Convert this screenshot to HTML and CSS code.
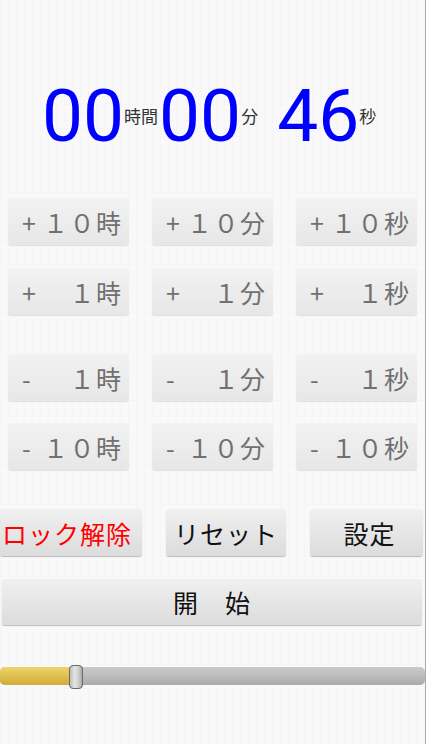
FILE: index.html
```html
<!DOCTYPE html>
<html lang="ja">
<head>
<meta charset="utf-8">
<title>Timer</title>
<link rel="stylesheet" href="styles.css">
</head>
<body>
<div class="screen">
  <div class="timer">
    <span class="big">00</span><span class="unit">時間</span>
    <span class="big mid">00</span><span class="unit">分</span>
    <span class="big sec">46</span><span class="unit">秒</span>
  </div>

  <div class="adjust plus">
    <button class="adj"><span>+</span><span class="num">１０時</span></button>
    <button class="adj"><span>+</span><span class="num">１０分</span></button>
    <button class="adj"><span>+</span><span class="num">１０秒</span></button>
    <button class="adj"><span>+</span><span class="num">１時</span></button>
    <button class="adj"><span>+</span><span class="num">１分</span></button>
    <button class="adj"><span>+</span><span class="num">１秒</span></button>
  </div>

  <div class="adjust minus">
    <button class="adj"><span>-</span><span class="num">１時</span></button>
    <button class="adj"><span>-</span><span class="num">１分</span></button>
    <button class="adj"><span>-</span><span class="num">１秒</span></button>
    <button class="adj"><span>-</span><span class="num">１０時</span></button>
    <button class="adj"><span>-</span><span class="num">１０分</span></button>
    <button class="adj"><span>-</span><span class="num">１０秒</span></button>
  </div>

  <div class="controls">
    <button class="ctl unlock">ロック解除</button>
    <button class="ctl">リセット</button>
    <button class="ctl setting">設定</button>
  </div>

  <button class="ctl start">開　始</button>

  <div class="slider">
    <div class="track">
      <div class="fill" style="width: 76px"></div>
    </div>
    <div class="thumb" style="left: 69px"></div>
  </div>
</div>
</body>
</html>
```

FILE: styles.css
```css
html, body {
  margin: 0;
  padding: 0;
}

body {
  background: #f8f8f8;
  width: 426px;
  height: 744px;
  overflow: hidden;
}

.screen {
  position: relative;
  width: 425px;
  height: 744px;
  border-right: 1px solid #a8a8a8;
  background-color: #f9f9f9;
  background-image:
    linear-gradient(rgba(0,0,0,0.012) 1px, transparent 1px),
    linear-gradient(90deg, rgba(0,0,0,0.012) 1px, transparent 1px);
  background-size: 8px 8px;
  font-family: "Noto Sans CJK JP", "Noto Sans", sans-serif;
}

.timer {
  display: flex;
  align-items: center;
  justify-content: flex-start;
  height: 74px;
  padding-top: 79px;
  padding-left: 42px;
}

.big {
  font-family: Roboto, "Open Sans", sans-serif;
  font-size: 73px;
  line-height: 74px;
  color: #0000ff;
}

.big.mid {
  margin-left: 1px;
}

.big.sec {
  margin-left: 19px;
}

.unit {
  font-family: "Noto Sans CJK JP", sans-serif;
  font-size: 17px;
  line-height: 20px;
  color: #333333;
}

button {
  font-family: "Noto Sans CJK JP", "Noto Sans", sans-serif;
  border: none;
  margin: 0;
  padding: 0;
  cursor: pointer;
}

.adjust {
  display: grid;
  grid-template-columns: 121px 121px 121px;
  grid-auto-rows: 47px;
  column-gap: 23px;
  row-gap: 23px;
  padding-left: 8px;
}

.adjust.plus {
  margin-top: 45px;
}

.adjust.minus {
  margin-top: 39px;
  row-gap: 22px;
}

.adj {
  display: flex;
  align-items: center;
  justify-content: space-between;
  padding: 0 8px 0 14px;
  font-size: 25px;
  color: #707070;
  background: linear-gradient(#f2f2f2, #e7e7e7);
  border-radius: 3px;
  box-shadow: 0 1px 1px rgba(0,0,0,0.10);
}

.adj .num {
  letter-spacing: 1.5px;
  margin-right: -1.5px;
}

.controls {
  display: grid;
  grid-template-columns: 142px 120px 113px;
  column-gap: 24px;
  margin-top: 39px;
}

.ctl {
  height: 47px;
  font-size: 25px;
  letter-spacing: 1px;
  color: #111111;
  background: linear-gradient(#f0f0f0, #dcdcdc);
  border-radius: 3px;
  box-shadow: 0 1px 1px rgba(0,0,0,0.25);
}

.ctl.unlock {
  color: #ff0000;
  text-align: left;
  padding-left: 2px;
  white-space: nowrap;
}

.ctl.setting {
  padding-left: 6px;
}

.ctl.start {
  display: block;
  width: 420px;
  height: 46px;
  margin: 23px 0 0 2px;
}

.slider {
  position: relative;
  margin-top: 42px;
  height: 24px;
}

.track {
  position: absolute;
  left: 0;
  top: 0;
  width: 425px;
  height: 18px;
  border-radius: 5px;
  overflow: hidden;
  background: linear-gradient(#c9c9c9, #bdbdbd 50%, #a9a9a9);
}

.fill {
  height: 100%;
  background: linear-gradient(#ecd46a, #e0c050 50%, #cfab3c);
}

.thumb {
  position: absolute;
  top: -2px;
  width: 12px;
  height: 22px;
  border: 1px solid #6a6a6a;
  border-radius: 4px;
  background: linear-gradient(90deg, #bdbdbd, #e4e4e4 40%, #cfcfcf 70%, #a8a8a8);
}
```
